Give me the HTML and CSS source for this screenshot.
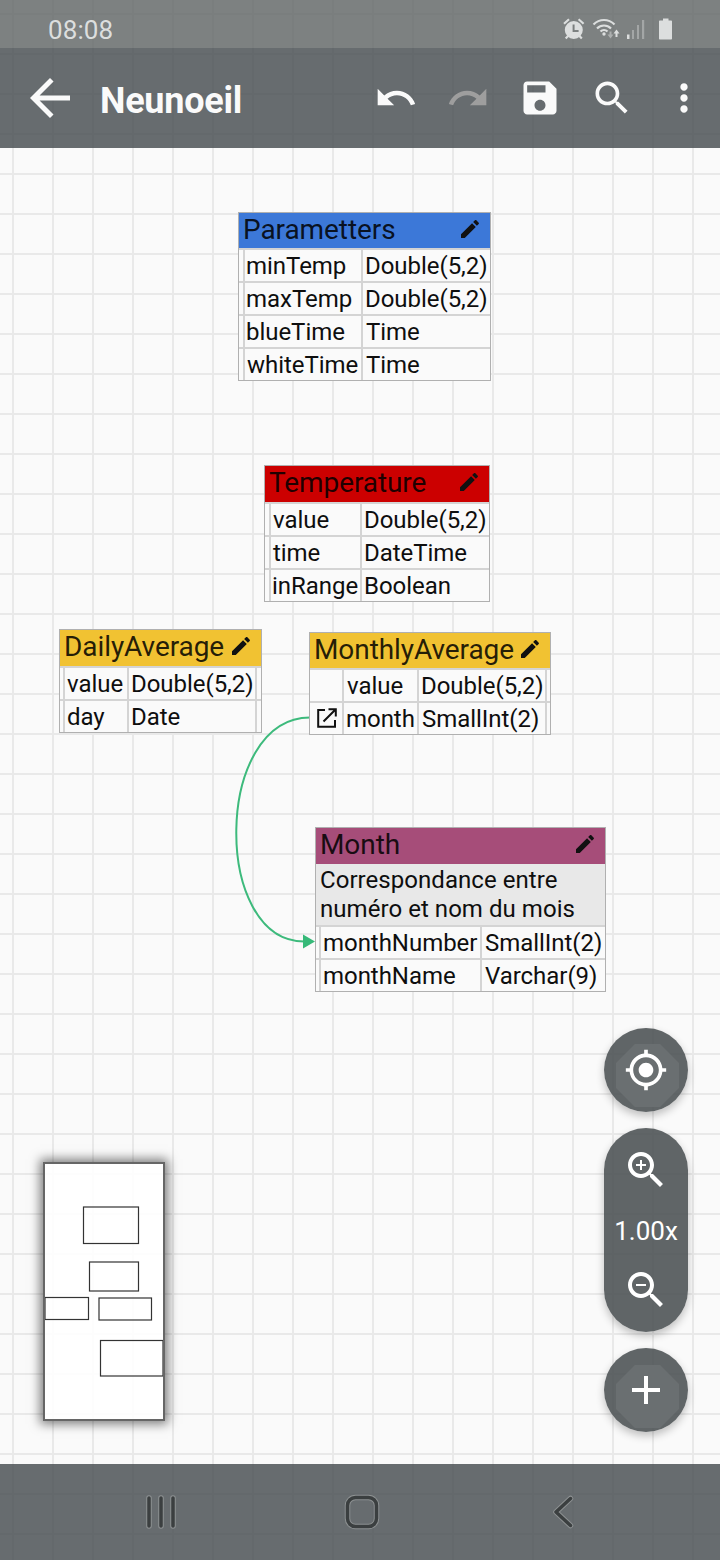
FILE: index.html
```html
<!DOCTYPE html>
<html lang="fr">
<head>
<meta charset="utf-8">
<title>Neunoeil</title>
<link rel="stylesheet" href="styles.css">
</head>
<body>
<svg class="defs" width="0" height="0" aria-hidden="true">
  <symbol id="pencil" viewBox="0 0 24 24"><path d="M3 17.25V21h3.75L17.81 9.94l-3.75-3.75L3 17.25zM20.71 7.04c.39-.39.39-1.02 0-1.41l-2.34-2.34c-.39-.39-1.02-.39-1.41 0l-1.83 1.83 3.75 3.75 1.83-1.83z"/></symbol>
  <symbol id="search" viewBox="0 0 24 24"><path d="M15.5 14h-.79l-.28-.27C15.41 12.59 16 11.11 16 9.5 16 5.91 13.09 3 9.5 3S3 5.91 3 9.5 5.91 16 9.5 16c1.61 0 3.09-.59 4.23-1.57l.27.28v.79l5 4.99L20.49 19l-4.99-5zm-6 0C7.01 14 5 11.99 5 9.5S7.01 5 9.5 5 14 7.01 14 9.5 11.99 14 9.5 14z"/></symbol>
  <symbol id="undo" viewBox="0 0 24 24"><path d="M12.5 8c-2.65 0-5.05.99-6.9 2.6L2 7v9h9l-3.62-3.62c1.39-1.16 3.16-1.88 5.12-1.88 3.54 0 6.55 2.31 7.6 5.5l2.37-.78C21.08 11.03 17.15 8 12.5 8z"/></symbol>
</svg>
<div class="screen">
  <header class="status">
    <span class="clock">08:08</span>
    <svg class="status-icons" width="112" height="24" viewBox="562 17 112 24">
      <path fill-rule="evenodd" d="M573.8 21a9 9 0 1 0 0 18 9 9 0 0 0 0-18zM572.6 24.500h2v5.500h4v2h-6z"/>
      <g fill="none" stroke="currentColor">
        <path stroke-width="2.200" d="M564 23.800l5-4.500M583.600 23.800l-5-4.500M568.500 35.500l-2.800 3M579 35.500l2.800 3"/>
        <path stroke-width="2.200" d="M593.500 24.500c6-6 15-6 21 0M597 28.500c4-4 10-4 14 0"/>
        <path stroke-width="2.200" d="M600.500 31.500c2-2 5-2 7 0"/>
      </g>
      <circle cx="604" cy="34" r="1.700"/>
      <path d="M616.500 29.500l3 4h-2v3.500h-2v-3.500h-2z"/>
      <path opacity=".5" d="M610.500 38.500l-3-4h2v-3h2v3h2z"/>
      <rect x="627" y="34.500" width="2.500" height="4.500"/>
      <path opacity=".4" d="M632 30h2v9h-2zM637 25h2v14h-2zM642 20h2.200v19h-2.200z"/>
      <path d="M663 18.500h5.500v2H671.200a.8.800 0 0 1 .8.800V38.700a.8.800 0 0 1-.8.800H659.800a.8.800 0 0 1-.8-.8V21.300a.8.800 0 0 1 .8-.8H663z"/>
    </svg>
  </header>
  <nav class="appbar">
    <svg class="back" viewBox="0 0 24 24"><path d="M20 11H7.830l5.590-5.590L12 4l-8 8 8 8 1.410-1.410L7.830 13H20v-2z"/></svg>
    <h1 class="title">Neunoeil</h1>
    <div class="actions">
      <svg class="action"><use href="#undo"/></svg>
      <svg class="action disabled"><use href="#undo"/></svg>
      <svg class="action" viewBox="0 0 24 24"><path d="M17 3H5c-1.110 0-2 .9-2 2v14c0 1.100.89 2 2 2h14c1.100 0 2-.9 2-2V7l-4-4zm-5 16c-1.660 0-3-1.340-3-3s1.340-3 3-3 3 1.340 3 3-1.340 3-3 3zm3-10H5V5h10v4z"/></svg>
      <svg class="action"><use href="#search"/></svg>
      <svg class="action" viewBox="0 0 24 24"><path d="M12 8c1.100 0 2-.9 2-2s-.9-2-2-2-2 .9-2 2 .9 2 2 2zm0 2c-1.100 0-2 .9-2 2s.9 2 2 2 2-.9 2-2-.9-2-2-2zm0 6c-1.100 0-2 .9-2 2s.9 2 2 2 2-.9 2-2-.9-2-2-2z"/></svg>
    </div>
  </nav>

  <main class="canvas">
    <svg class="links" width="720" height="1316" viewBox="0 148 720 1316">
      <path class="link" d="M310 717.500C213.500 717.500 212 941.500 304 941.500"/>
      <path class="arrow" d="M303 934.500v14l12-7z"/>
    </svg>

    <section class="entity parameters">
      <div class="head blue"><span>Parametters</span><svg class="edit"><use href="#pencil"/></svg></div>
      <div class="row"><i></i><b>minTemp</b><b>Double(5,2)</b></div>
      <div class="row"><i></i><b>maxTemp</b><b>Double(5,2)</b></div>
      <div class="row"><i></i><b>blueTime</b><b class="in">Time</b></div>
      <div class="row"><i></i><b class="in">whiteTime</b><b class="in">Time</b></div>
    </section>

    <section class="entity temperature">
      <div class="head red"><span>Temperature</span><svg class="edit"><use href="#pencil"/></svg></div>
      <div class="row"><i></i><b class="in">value</b><b>Double(5,2)</b></div>
      <div class="row"><i></i><b class="in">time</b><b>DateTime</b></div>
      <div class="row"><i></i><b>inRange</b><b>Boolean</b></div>
    </section>

    <section class="entity daily">
      <div class="head yellow"><span>DailyAverage</span><svg class="edit"><use href="#pencil"/></svg></div>
      <div class="row"><i></i><b>value</b><b>Double(5,2)</b><b></b></div>
      <div class="row"><i></i><b>day</b><b>Date</b><b></b></div>
    </section>

    <section class="entity monthly">
      <div class="head yellow"><span>MonthlyAverage</span><svg class="edit"><use href="#pencil"/></svg></div>
      <div class="row"><i></i><b class="in">value</b><b>Double(5,2)</b><b></b></div>
      <div class="row"><i><svg class="foreign" viewBox="0 0 20 20"><path d="M8 2H1.200V18.800H18V12M11.500 1.200H18.800V8.500M18.500 1.500L6.500 13.500"/></svg></i><b>month</b><b class="in">SmallInt(2)</b><b></b></div>
    </section>

    <section class="entity month">
      <div class="head purple"><span>Month</span><svg class="edit"><use href="#pencil"/></svg></div>
      <p class="note">Correspondance entre<br>numéro et nom du mois</p>
      <div class="row"><i></i><b>monthNumber</b><b class="in">SmallInt(2)</b></div>
      <div class="row"><i></i><b>monthName</b><b class="in">Varchar(9)</b></div>
    </section>

    <svg class="minimap" viewBox="45 1164 118 255">
      <g class="frames">
        <rect x="83.500" y="1207" width="55" height="36.500"/>
        <rect x="89.500" y="1262" width="49" height="29"/>
        <rect x="45" y="1297.500" width="43.500" height="22"/>
        <rect x="99" y="1298" width="52.500" height="22"/>
        <rect x="100.500" y="1340.500" width="62.500" height="35.500"/>
      </g>
    </svg>

    <div class="controls">
      <div class="fab">
        <svg class="glyph small" viewBox="0 0 24 24"><path d="M12 8c-2.210 0-4 1.790-4 4s1.790 4 4 4 4-1.790 4-4-1.790-4-4-4zm8.940 3c-.46-4.170-3.770-7.480-7.940-7.940V1h-2v2.060C6.830 3.520 3.520 6.830 3.060 11H1v2h2.060c.46 4.170 3.770 7.480 7.940 7.940V23h2v-2.060c4.170-.46 7.480-3.770 7.940-7.940H23v-2h-2.060zM12 19c-3.870 0-7-3.130-7-7s3.130-7 7-7 7 3.130 7 7-3.130 7-7 7z"/></svg>
      </div>
      <div class="zoom">
        <svg class="glyph" viewBox="0 0 24 24"><use href="#search" width="24" height="24"/><path d="M12 10h-2v2H9v-2H7V9h2V7h1v2h2v1z"/></svg>
        <span class="level">1.00x</span>
        <svg class="glyph" viewBox="0 0 24 24"><use href="#search" width="24" height="24"/><path d="M7 9h5v1H7z"/></svg>
      </div>
      <div class="fab add">
        <svg class="glyph" viewBox="0 0 24 24"><path d="M19 13h-6v6h-2v-6H5v-2h6V5h2v6h6v2z"/></svg>
      </div>
    </div>
  </main>

  <footer class="sysnav">
    <svg class="key" viewBox="0 0 40 40"><path class="rim" d="M8 6V34M20 6V34M32 6V34"/><path class="ink" d="M8 6V34M20 6V34M32 6V34"/></svg>
    <svg class="key" viewBox="0 0 40 40"><rect class="rim" x="5.500" y="5.500" width="29" height="29" rx="8"/><rect class="ink" x="5.500" y="5.500" width="29" height="29" rx="8"/></svg>
    <svg class="key" viewBox="0 0 40 40"><path class="rim" d="M27.500 6.500L13 20L27.500 33.500"/><path class="ink" d="M27.500 6.500L13 20L27.500 33.500"/></svg>
  </footer>
</div>
</body>
</html>
```
FILE: styles.css
```css
* { box-sizing: border-box; }
body {
  margin: 0;
  font-family: Roboto, "Liberation Sans", sans-serif;
  color: #0e0e0e;
}
.defs { position: absolute; }
svg { display: block; fill: currentColor; flex: none; }
.screen {
  width: 720px;
  height: 1560px;
  display: flex;
  flex-direction: column;
  overflow: hidden;
  background-color: #fafafa;
  background-image:
    linear-gradient(90deg, #e9e9e9 2px, transparent 2px),
    linear-gradient(#e9e9e9 2px, transparent 2px);
  background-size: 40px 40px;
  background-position: 12px 13px;
}

.status {
  height: 48px;
  padding: 12px 46px 0 48px;
  display: flex;
  justify-content: space-between;
  background: rgba(94, 99, 99, .8);
  color: #dcdede;
}
.clock { font-size: 26px; line-height: 36px; letter-spacing: .1px; }
.status-icons { margin-top: 5px; }

.appbar {
  height: 100px;
  padding: 0 14px 0 20px;
  display: flex;
  align-items: center;
  background: rgba(66, 72, 76, .8);
  color: #fafafa;
}
.back { width: 60px; height: 60px; }
.title { margin: 5px 0 0 20px; font-size: 36px; line-height: 44px; font-weight: 700; letter-spacing: -.25px; }
.actions { margin-left: auto; display: flex; gap: 28px; }
.action { width: 44px; height: 44px; }
.disabled { transform: scaleX(-1); color: #9e9e9e; }

.canvas { height: 1316px; position: relative; }
.links { position: absolute; left: 0; top: 0; }
.link { fill: none; stroke: #3dba7c; stroke-width: 2; }
.arrow { fill: #36b978; }

.entity {
  position: absolute;
  border: 1px solid #b0b0b0;
  background: #fafafa;
  font-size: 24px;
}
.parameters { left: 238px; top: 64px; width: 253px; --cols: 4px 118px 1fr; --head: 35px; }
.temperature { left: 264px; top: 317px; width: 226px; --cols: 4px 91px 1fr; --head: 36px; }
.daily { left: 59px; top: 481px; width: 203px; --cols: 3px 64px 128px 1fr; --head: 36px; }
.monthly { left: 309px; top: 484px; width: 242px; --cols: 32px 75px 128px 1fr; --head: 35px; }
.month { left: 315px; top: 679px; width: 291px; --cols: 3px 161px 1fr; --head: 36px; }

.head {
  height: var(--head);
  padding: 0 8px 0 4px;
  display: flex;
  justify-content: space-between;
  font-size: 28px;
  line-height: 33px;
  letter-spacing: -.08px;
  color: rgba(0, 0, 0, .86);
}
.blue { background: #3c78d8; }
.red { background: #cc0000; }
.yellow { background: #f1c232; }
.purple { background: #a64d79; }
.edit { width: 24px; height: 24px; margin-top: 4px; color: #111; }

.row { display: grid; grid-template-columns: var(--cols); height: 33px; border-top: 2px solid #d4d4d4; letter-spacing: -.04px; }
.row b {
  height: 31px;
  border-left: 2px solid #d4d4d4;
  padding-left: 1px;
  font-weight: 400;
  line-height: 33px;
  white-space: nowrap;
}
.row b.in { padding-left: 2px; }
.parameters b:last-child,
.daily b, .monthly b, .month b { padding-left: 2px; }
.temperature b:last-child { padding-left: 2px; }
.parameters b.in:last-child,
.daily b.in, .monthly b.in, .month b.in { padding-left: 3px; }
.foreign { width: 20px; height: 20px; margin: 5px 0 0 7px; fill: none; stroke: #111; stroke-width: 2; }
.note { margin: 0; height: 61px; padding: 2px 4px; background: #e8e8e8; line-height: 29px; white-space: nowrap; letter-spacing: .05px; }

.minimap {
  position: absolute;
  left: 43px;
  top: 1014px;
  width: 122px;
  height: 259px;
  border: 2px solid #666;
  background: rgba(255, 255, 255, .9);
  box-shadow: 0 0 10px 3px rgba(0, 0, 0, .5);
}
.frames { fill: none; stroke: #333; stroke-width: 1.2; }

.controls {
  position: absolute;
  right: 32px;
  bottom: 32px;
  width: 84px;
  display: flex;
  flex-direction: column;
  gap: 16px;
  color: #fff;
}
.fab, .zoom {
  border-radius: 42px;
  background: rgba(74, 80, 82, .88);
  box-shadow: 0 4px 8px rgba(0, 0, 0, .24);
}
.fab { position: relative; height: 84px; display: grid; place-items: center; overflow: hidden; }
.fab::before {
  content: "";
  position: absolute;
  left: 12px;
  top: 16px;
  width: 63px;
  height: 63px;
  background: #6a6f71;
  clip-path: polygon(30% 0, 70% 0, 100% 30%, 100% 70%, 70% 100%, 30% 100%, 0 70%, 0 30%);
}
.add::before { top: 17px; }
.zoom { height: 204px; padding: 18px 0; display: flex; flex-direction: column; align-items: center; justify-content: space-between; }
.glyph { position: relative; width: 48px; height: 48px; }
.small { width: 44px; height: 44px; }
.level { padding-top: 2px; font-size: 26px; line-height: 32px; }

.sysnav {
  height: 96px;
  padding: 0 137px 0 141px;
  display: flex;
  align-items: center;
  justify-content: space-between;
  background: rgba(66, 72, 76, .8);
}
.key { width: 40px; height: 40px; fill: none; stroke-linecap: round; stroke-linejoin: round; }
.rim { stroke: #8d9192; stroke-width: 5.5; }
.ink { stroke: #3b3f40; stroke-width: 3.5; }
```
